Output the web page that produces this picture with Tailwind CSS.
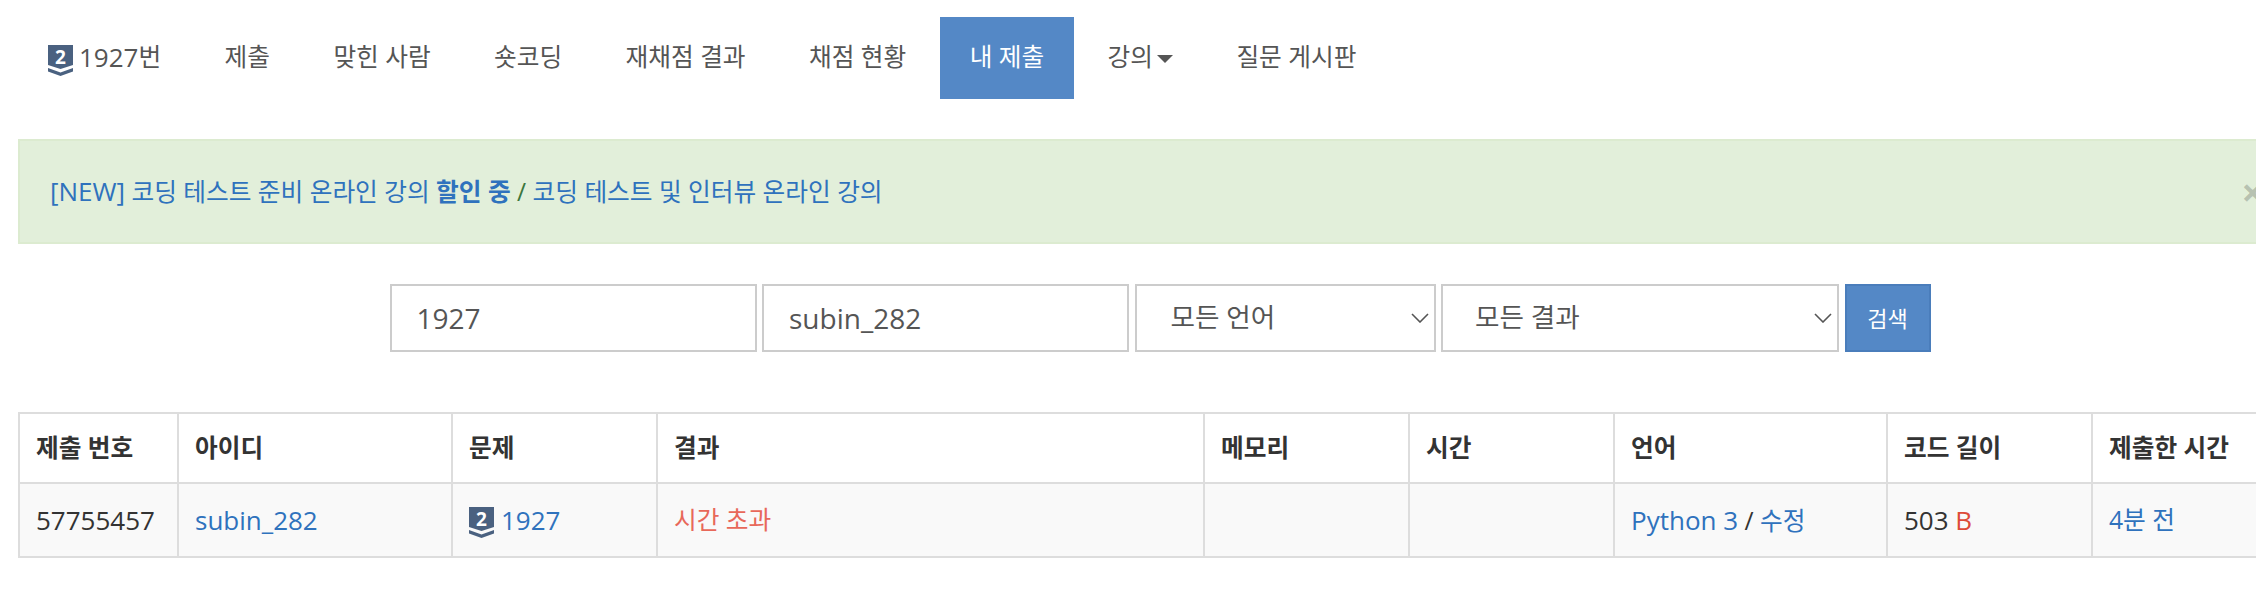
<!DOCTYPE html>
<html lang="ko">
<head>
    <meta charset="UTF-8">
    <meta name="viewport" content="width=device-width, initial-scale=1.0">
    <title>1927번 내 제출</title>
    <script src="https://cdn.jsdelivr.net/npm/@tailwindcss/browser@4"></script>
</head>
<body class="bg-white overflow-hidden text-[24.7px] text-[#333] font-['Open_Sans','Noto_Sans_CJK_KR',sans-serif]">
<div class="w-[2286px] ml-[18px]">

    <!-- 문제 메뉴 -->
    <ul class="flex gap-[3.4px] pt-[17px] text-[#555]">
        <li class="flex items-center h-[82px] px-[30px] pb-[2px]">
            <svg class="w-[25px] h-[31px] mr-[6px] mt-[7px] overflow-visible" viewBox="0 0 25 31">
                <path fill="#4a6180" d="M0 0H25V20L12.5 24L0 20Z"/>
                <path fill="#4a6180" d="M0 23L12.5 27.5L25 23V26.5L12.5 31L0 26.5Z"/>
                <text x="12.5" y="19" text-anchor="middle" fill="#fff" font-size="19" font-weight="700">2</text>
            </svg>
            <span class="text-[26px]">1927</span>번
        </li>
        <li class="flex items-center h-[82px] px-[30px] pb-[2px]">제출</li>
        <li class="flex items-center h-[82px] px-[30px] pb-[2px]">맞힌 사람</li>
        <li class="flex items-center h-[82px] px-[30px] pb-[2px]">숏코딩</li>
        <li class="flex items-center h-[82px] px-[30px] pb-[2px]">재채점 결과</li>
        <li class="flex items-center h-[82px] px-[30px] pb-[2px]">채점 현황</li>
        <li class="flex items-center h-[82px] px-[30px] pb-[2px] bg-[#5488c6] text-white">내 제출</li>
        <li class="flex items-center h-[82px] px-[30px] pb-[2px]">
            강의<span class="ml-[4px] mt-[3px] border-x-[8px] border-x-transparent border-t-[8px] border-t-[#555]"></span>
        </li>
        <li class="flex items-center h-[82px] px-[30px] pb-[2px]">질문 게시판</li>
    </ul>

    <!-- 알림 -->
    <div class="flex items-center justify-between h-[105px] mt-[40px] pl-[30px] pr-[38px] border-2 border-[#dcebd0] bg-[#e2efda] text-[#2f72bd]">
        <p><span class="text-[26px]">[NEW]</span> 코딩 테스트 준비 온라인 강의 <b class="font-bold">할인 중</b> <span class="text-[#3c763d]">/</span> 코딩 테스트 및 인터뷰 온라인 강의</p>
        <span class="text-[40px] font-bold text-black/20">×</span>
    </div>

    <!-- 검색 -->
    <form class="flex justify-center gap-[5.5px] h-[68px] mt-[40px] pr-[2px]">
        <input class="w-[367px] px-[25px] border-2 border-[#ccc] text-[#555] text-[28px]" value="1927">
        <input class="w-[367px] px-[25px] border-2 border-[#ccc] text-[#555] text-[28px]" value="subin_282">
        <div class="relative w-[301px]">
            <select class="w-full h-full appearance-none px-[34px] border-2 border-[#ccc] rounded-none bg-white text-[#555] text-[26.6px]"><option>모든 언어</option></select>
            <svg class="absolute right-[7px] top-[29px] w-[18px] h-[10px] pointer-events-none" viewBox="0 0 18 10" fill="none" stroke="#555" stroke-width="1.6"><path d="M1 1L9 9L17 1"/></svg>
        </div>
        <div class="relative w-[398px]">
            <select class="w-full h-full appearance-none px-[32px] border-2 border-[#ccc] rounded-none bg-white text-[#555] text-[26.6px]"><option>모든 결과</option></select>
            <svg class="absolute right-[7px] top-[29px] w-[18px] h-[10px] pointer-events-none" viewBox="0 0 18 10" fill="none" stroke="#555" stroke-width="1.6"><path d="M1 1L9 9L17 1"/></svg>
        </div>
        <button type="button" class="w-[86px] border-2 border-[#4a7dbb] bg-[#5488c6] text-white text-[22px]">검색</button>
    </form>

    <!-- 채점 결과 -->
    <table class="table-fixed w-[2286px] mt-[60px] border-collapse">
        <colgroup>
            <col class="w-[159px]"><col class="w-[274px]"><col class="w-[205px]"><col class="w-[547px]">
            <col class="w-[205px]"><col class="w-[205px]"><col class="w-[273px]"><col class="w-[205px]"><col>
        </colgroup>
        <thead>
            <tr class="h-[70px] text-left">
                <th class="px-[16px] border-2 border-[#ddd] font-bold">제출 번호</th>
                <th class="px-[16px] border-2 border-[#ddd] font-bold">아이디</th>
                <th class="px-[16px] border-2 border-[#ddd] font-bold">문제</th>
                <th class="px-[16px] border-2 border-[#ddd] font-bold">결과</th>
                <th class="px-[16px] border-2 border-[#ddd] font-bold">메모리</th>
                <th class="px-[16px] border-2 border-[#ddd] font-bold">시간</th>
                <th class="px-[16px] border-2 border-[#ddd] font-bold">언어</th>
                <th class="px-[16px] border-2 border-[#ddd] font-bold">코드 길이</th>
                <th class="px-[16px] border-2 border-[#ddd] font-bold">제출한 시간</th>
            </tr>
        </thead>
        <tbody>
            <tr class="h-[74px] bg-[#f9f9f9]">
                <td class="px-[16px] border-2 border-[#ddd] text-[26px]">57755457</td>
                <td class="px-[16px] border-2 border-[#ddd] text-[#2f72bd] text-[26px]">subin_282</td>
                <td class="px-[16px] border-2 border-[#ddd] text-[#2f72bd] text-[26px]">
                    <span class="flex items-center">
                        <svg class="w-[25px] h-[31px] mr-[7px] mt-[5px] overflow-visible" viewBox="0 0 25 31">
                            <path fill="#4a6180" d="M0 0H25V20L12.5 24L0 20Z"/>
                            <path fill="#4a6180" d="M0 23L12.5 27.5L25 23V26.5L12.5 31L0 26.5Z"/>
                            <text x="12.5" y="19" text-anchor="middle" fill="#fff" font-size="19" font-weight="700">2</text>
                        </svg>
                        1927
                    </span>
                </td>
                <td class="px-[16px] border-2 border-[#ddd] text-[#e8685a]">시간 초과</td>
                <td class="px-[16px] border-2 border-[#ddd]"></td>
                <td class="px-[16px] border-2 border-[#ddd]"></td>
                <td class="px-[16px] border-2 border-[#ddd] text-[#2f72bd]"><span class="text-[26px]">Python 3</span> <span class="text-[#333]">/</span> 수정</td>
                <td class="px-[16px] border-2 border-[#ddd] text-[26px]">503 <span class="text-[#dd4b39]">B</span></td>
                <td class="px-[16px] border-2 border-[#ddd] text-[#2f72bd]">4분 전</td>
            </tr>
        </tbody>
    </table>
</div>
</body>
</html>
